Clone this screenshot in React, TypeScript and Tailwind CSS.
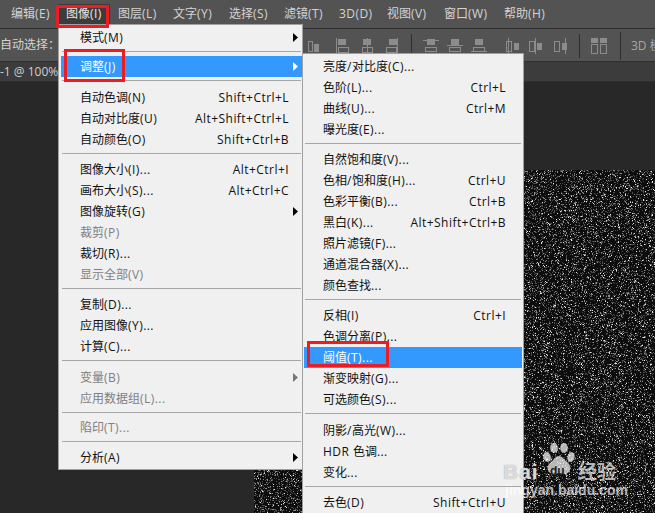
import { useMemo } from "react";

const FONT = "font-['Open_Sans','Noto_Sans_CJK_SC',sans-serif]";

type Row =
  | { gap: number }
  | { label: string; keys?: string; sub?: boolean; off?: boolean; on?: boolean };

const imageMenu: Row[] = [
  { label: "模式(M)", sub: true },
  { gap: 8 },
  { label: "调整(J)", sub: true, on: true },
  { gap: 10 },
  { label: "自动色调(N)", keys: "Shift+Ctrl+L" },
  { label: "自动对比度(U)", keys: "Alt+Shift+Ctrl+L" },
  { label: "自动颜色(O)", keys: "Shift+Ctrl+B" },
  { gap: 9 },
  { label: "图像大小(I)...", keys: "Alt+Ctrl+I" },
  { label: "画布大小(S)...", keys: "Alt+Ctrl+C" },
  { label: "图像旋转(G)", sub: true },
  { label: "裁剪(P)", off: true },
  { label: "裁切(R)..." },
  { label: "显示全部(V)", off: true },
  { gap: 9 },
  { label: "复制(D)..." },
  { label: "应用图像(Y)..." },
  { label: "计算(C)..." },
  { gap: 10 },
  { label: "变量(B)", sub: true, off: true },
  { label: "应用数据组(L)...", off: true },
  { gap: 8 },
  { label: "陷印(T)...", off: true },
  { gap: 9 },
  { label: "分析(A)", sub: true },
];

const adjustMenu: Row[] = [
  { label: "亮度/对比度(C)..." },
  { label: "色阶(L)...", keys: "Ctrl+L" },
  { label: "曲线(U)...", keys: "Ctrl+M" },
  { label: "曝光度(E)..." },
  { gap: 9 },
  { label: "自然饱和度(V)..." },
  { label: "色相/饱和度(H)...", keys: "Ctrl+U" },
  { label: "色彩平衡(B)...", keys: "Ctrl+B" },
  { label: "黑白(K)...", keys: "Alt+Shift+Ctrl+B" },
  { label: "照片滤镜(F)..." },
  { label: "通道混合器(X)..." },
  { label: "颜色查找..." },
  { gap: 9 },
  { label: "反相(I)", keys: "Ctrl+I" },
  { label: "色调分离(P)..." },
  { label: "阈值(T)...", on: true },
  { label: "渐变映射(G)..." },
  { label: "可选颜色(S)..." },
  { gap: 10 },
  { label: "阴影/高光(W)..." },
  { label: "HDR 色调..." },
  { label: "变化..." },
  { gap: 9 },
  { label: "去色(D)", keys: "Shift+Ctrl+U" },
];

const topMenu = [
  { label: "编辑(E)", w: "w-[55px]" },
  { label: "图像(I)", w: "w-[52px]" },
  { label: "图层(L)", w: "w-[55px]" },
  { label: "文字(Y)", w: "w-[56px]" },
  { label: "选择(S)", w: "w-[55px]" },
  { label: "滤镜(T)", w: "w-[55px]" },
  { label: "3D(D)", w: "w-[48px]" },
  { label: "视图(V)", w: "w-[57px]" },
  { label: "窗口(W)", w: "w-[60px]" },
  { label: "帮助(H)", w: "w-[60px]" },
];

// the Latin part of a label runs a little wider than Open Sans
function Mixed({ text }: { text: string }) {
  return (
    <span className="whitespace-pre">
      {text.split(/([\x00-\x7f]+)/).map((part, i) =>
        i % 2 ? (
          <span key={i} className="tracking-[0.45px]">
            {part}
          </span>
        ) : (
          part
        ),
      )}
    </span>
  );
}

function Arrow({ color }: { color: string }) {
  return (
    <svg width="5" height="9" viewBox="0 0 5 9" className="absolute top-[6px] right-[4px]">
      <path d="M0 0 L5 4.5 L0 9 Z" fill={color} />
    </svg>
  );
}

function MenuRows({ rows, right }: { rows: Row[]; right: string }) {
  return (
    <>
      {rows.map((r, i) => {
        if ("gap" in r) {
          return (
            <div key={i} style={{ height: r.gap }} className="pt-[3px] pl-[1px] pr-[1px]">
              <div className="h-px bg-[#a6a6a6]" />
            </div>
          );
        }
        const tone = r.on ? "bg-[#3399ff] text-white" : r.off ? "text-[#808080]" : "text-[#111111]";
        return (
          <div key={i} className={`relative flex h-[21px] items-center justify-between pl-[19px] ${right} ${tone}`}>
            <Mixed text={r.label} />
            {r.keys && <span className="tracking-[0.45px]">{r.keys}</span>}
            {r.sub && <Arrow color={r.on ? "#ffffff" : r.off ? "#777777" : "#000000"} />}
          </div>
        );
      })}
    </>
  );
}

// seeded so the speckle is the same every run
function useNoise(w: number, h: number, seed: number) {
  return useMemo(() => {
    let s = seed;
    const rnd = () => {
      s = (s * 1664525 + 1013904223) % 4294967296;
      return s / 4294967296;
    };
    const paths = ["", "", ""];
    for (let y = 0; y < h; y++) {
      for (let x = 0; x < w; x++) {
        const v = rnd();
        if (v < 0.025) paths[0] += `M${x} ${y}h1v1h-1z`;
        else if (v < 0.1) paths[1] += `M${x} ${y}h1v1h-1z`;
        else if (v < 0.26) paths[2] += `M${x} ${y}h1v1h-1z`;
      }
    }
    return paths;
  }, [w, h, seed]);
}

function Noise({ w, h, seed, className }: { w: number; h: number; seed: number; className: string }) {
  const paths = useNoise(w, h, seed);
  return (
    <svg width={w} height={h} className={className} shapeRendering="crispEdges">
      <rect width={w} height={h} fill="#0d0d0d" />
      <path d={paths[2]} fill="#4d4d4d" />
      <path d={paths[1]} fill="#8f8f8f" />
      <path d={paths[0]} fill="#e6e6e6" />
    </svg>
  );
}

const LINE = "#8c8c8c";

function AlignV({ line }: { line: number }) {
  const fillX = line === 0 ? 2 : line === 6 ? 2 : 3;
  const boxX = line === 11 ? 0 : line === 0 ? 2 : 1;
  return (
    <svg width="14" height="16" viewBox="0 0 14 16" className="shrink-0">
      <rect x={fillX} y="1" width="8" height="6" fill={LINE} />
      <rect x={boxX + 0.5} y="9.5" width="10" height="5" fill="#535353" stroke={LINE} />
      <path d={`M${line + 0.5} 0V16`} stroke={LINE} />
    </svg>
  );
}

function AlignH({ line }: { line: number }) {
  return (
    <svg width="16" height="16" viewBox="0 0 16 16" className="shrink-0">
      <rect x="4" y="1" width="8" height="6" fill={LINE} />
      <rect x="2.5" y="9.5" width="11" height="4" fill="#535353" stroke={LINE} />
      <path d={`M0 ${line + 0.5}H16`} stroke={LINE} />
    </svg>
  );
}

function DistH({ line }: { line: number }) {
  return (
    <svg width="14" height="16" viewBox="0 0 14 16" className="shrink-0">
      <rect x="0.5" y="3.5" width="5" height="10" fill="#535353" stroke={LINE} />
      <rect x="8" y="5" width="5" height="7" fill={LINE} />
      <path d={`M${line + 0.5} 0V16`} stroke={LINE} />
    </svg>
  );
}

function DistGrid() {
  return (
    <svg width="16" height="16" viewBox="0 0 16 16" className="shrink-0">
      <rect x="0" y="0" width="7" height="5" fill={LINE} />
      <rect x="9" y="0" width="7" height="5" fill={LINE} />
      <rect x="0.5" y="6.5" width="6" height="9" fill="#535353" stroke={LINE} />
      <rect x="9.5" y="6.5" width="6" height="9" fill="#535353" stroke={LINE} />
    </svg>
  );
}

function Watermark() {
  return (
    <div className="pointer-events-none absolute left-[503px] top-[443px] h-[55px] w-[120px] text-white/70">
      <svg width="36" height="36" viewBox="0 0 36 36" className="absolute left-[38px] top-0" fill="currentColor">
        <ellipse cx="6" cy="14" rx="3.8" ry="5" transform="rotate(-15 6 14)" />
        <ellipse cx="13" cy="5" rx="3.8" ry="5" />
        <ellipse cx="23" cy="5" rx="3.8" ry="5" />
        <ellipse cx="30" cy="14" rx="3.6" ry="5" transform="rotate(15 30 14)" />
        <path d="M18 13c4 0 5 4 9 7 4 3 3 11-4 11-2 0-3-1-5-1s-3 1-5 1c-7 0-8-8-4-11 4-3 5-7 9-7z" />
      </svg>
      <span className="absolute left-0 top-[17px] font-['Liberation_Sans',sans-serif] text-[21px] font-bold leading-[24px] tracking-[1px] [text-shadow:0_0_1px_#888888]">
        Bai
      </span>
      <span className="absolute left-[47px] top-[21px] font-['Liberation_Sans',sans-serif] text-[12px] font-bold leading-[14px] text-[#222222]">
        du
      </span>
      <span className="absolute left-[75px] top-[16px] font-['Noto_Sans_CJK_SC',sans-serif] text-[19px] font-bold leading-[24px]">
        经验
      </span>
      <span className="absolute left-[2px] top-[39px] whitespace-nowrap font-['Liberation_Sans',sans-serif] text-[14px] font-bold leading-[16px]">
        jingyan.baidu.com
      </span>
    </div>
  );
}

export default function App() {
  return (
    <div className={`relative h-[513px] w-[655px] overflow-hidden bg-[#282828] text-[12px] leading-none ${FONT}`}>
      {/* menu bar */}
      <div className="flex h-[29px] items-start border-b border-[#2f2f2f] bg-[#535353] pl-[3px] text-[#d4d4d4]">
        {topMenu.map((m) => (
          <div
            key={m.label}
            className={`mt-[4px] flex h-[20px] shrink-0 items-center whitespace-nowrap pl-[8px] ${m.w} ${m.label === "图像(I)" ? "bg-[#3c3c3c] text-[#e6e6e6]" : ""}`}
          >
            <Mixed text={m.label} />
          </div>
        ))}
      </div>

      {/* options bar */}
      <div className="relative flex h-[33px] items-center overflow-hidden border-b border-[#2f2f2f] bg-[#535353] text-[#d4d4d4]">
        <span className="w-[308px] shrink-0 whitespace-nowrap">自动选择：</span>
        <svg width="11" height="14" viewBox="0 0 11 14" className="mt-[1px] shrink-0">
          <rect x="0.5" y="2.5" width="4" height="10" fill="#535353" stroke={LINE} />
          <rect x="6" y="5" width="5" height="8" fill={LINE} />
        </svg>
        <div className="flex shrink-0 items-center pl-[17px] pt-[1px]">
          <AlignV line={0} />
          <div className="w-[11px]" />
          <AlignV line={6} />
          <div className="w-[11px]" />
          <AlignV line={11} />
          <div className="mx-[11px] h-[24px] w-px bg-[#2f2f2f]" />
          <AlignH line={2} />
          <div className="w-[8px]" />
          <AlignH line={7} />
          <div className="w-[8px]" />
          <AlignH line={13} />
          <div className="w-[19px]" />
          <DistH line={2} />
          <div className="w-[9px]" />
          <DistH line={6} />
          <div className="w-[11px]" />
          <DistH line={11} />
          <div className="mx-[11px] h-[24px] w-px bg-[#2f2f2f]" />
          <DistGrid />
          <div className="ml-[13px] mr-[10px] h-[28px] w-px bg-[#2f2f2f]" />
          <span className="whitespace-nowrap text-[#a8a8a8]">3D 模</span>
        </div>
      </div>

      {/* document tab */}
      <div className="flex h-[20px] items-center overflow-hidden border-b border-[#2f2f2f] bg-[#3c3c3c] text-[#cfcfcf]">
        <span className="whitespace-nowrap">-1 @ 100%</span>
      </div>

      {/* canvas */}
      <Noise w={131} h={343} seed={17} className="absolute left-[524px] top-[170px]" />
      <Noise w={50} h={44} seed={91} className="absolute left-[254px] top-[469px]" />

      {/* image menu */}
      <div className="absolute left-[58px] top-[24px] w-[245px] border border-[#a0a0a0] bg-[#f0f0f0] pb-[1px] pl-[2px] pt-[2px]">
        <MenuRows rows={imageMenu} right="pr-[13px]" />
      </div>

      {/* adjustments submenu */}
      <div className="absolute left-[302px] top-[53px] w-[222px] border border-[#a0a0a0] bg-[#f0f0f0] pl-[1px] pr-[1px] pt-[2px]">
        <MenuRows rows={adjustMenu} right="pr-[16px]" />
      </div>

      {/* screenshot annotations */}
      <div className="absolute left-[56px] top-[5px] h-[23px] w-[53px] border-[3px] border-[#ec1c24]" />
      <div className="absolute left-[64px] top-[49px] h-[33px] w-[61px] border-[3px] border-[#ec1c24]" />
      <div className="absolute left-[307px] top-[341px] h-[26px] w-[82px] border-[3px] border-[#ec1c24]" />
      <Watermark />
    </div>
  );
}
